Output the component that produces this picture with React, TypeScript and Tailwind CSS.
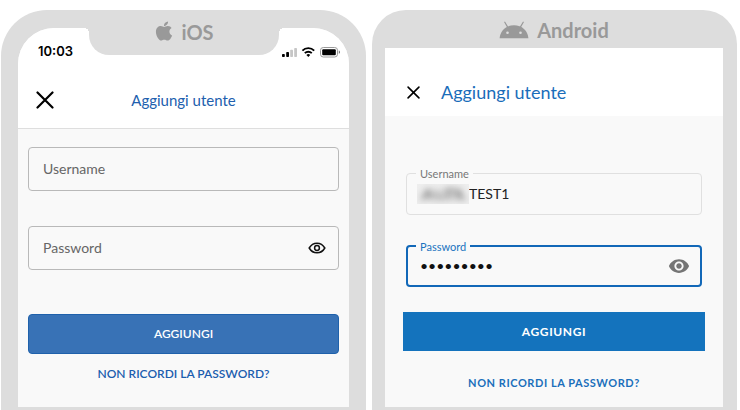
import { useState } from "react"
import { FaApple } from "react-icons/fa"
import { MdVisibility } from "react-icons/md"

interface CloseIconProps {
  className?: string
}

function CloseIcon({ className }: CloseIconProps) {
  return (
    <svg viewBox="0 0 18 18" className={className} fill="none" stroke="currentColor" strokeWidth="2.2" strokeLinecap="round">
      <path d="M1.5 1.5 16.5 16.5M16.5 1.5 1.5 16.5" />
    </svg>
  )
}

function AndroidHead() {
  return (
    <svg viewBox="0 0 30 18" className="h-[18px] w-[30px]" fill="#999999">
      <path d="M.6 17.2C1.2 9.6 7 4.2 15 4.2s13.8 5.4 14.4 13z" />
      <path d="M5.8 1.2 8.8 6.4M24.2 1.2 21.2 6.4" stroke="#999999" strokeWidth="1.2" strokeLinecap="round" />
      <circle cx="8.5" cy="11.8" r="1.3" fill="#dddddd" />
      <circle cx="21.5" cy="11.8" r="1.3" fill="#dddddd" />
    </svg>
  )
}

function StatusIcons() {
  return (
    <svg viewBox="0 0 60 12" className="h-3 w-[60px]">
      <g fill="#000000">
        <rect x="1" y="8" width="2.8" height="3" rx="0.8" />
        <rect x="5.2" y="6" width="2.8" height="5" rx="0.8" />
      </g>
      <g fill="#c6c6c6">
        <rect x="9.2" y="3.8" width="2.8" height="7.2" rx="0.8" />
        <rect x="13.2" y="2" width="2.8" height="9" rx="0.8" />
      </g>
      <g fill="none" stroke="#000000" strokeWidth="1.8">
        <path d="M21.4 4.7a8.2 8.2 0 0 1 11.8 0" />
        <path d="M23.8 7.2a4.9 4.9 0 0 1 7 0" />
      </g>
      <path d="M27.3 11 25.4 9a2.7 2.7 0 0 1 3.8 0z" />
      <rect x="39.5" y="1.5" width="17" height="9.5" rx="2.8" fill="none" stroke="#9a9a9a" />
      <rect x="41.2" y="3.2" width="13.6" height="6.1" rx="1" />
      <path d="M57.8 4.6c1 .4 1.2 1 1.2 1.6s-.2 1.2-1.2 1.6z" fill="#777777" />
    </svg>
  )
}

function OutlineEye() {
  return (
    <svg viewBox="0 0 18 12" className="h-3 w-[18px]" fill="none" stroke="#111111" strokeWidth="1.5">
      <path d="M1.2 6C3 2.9 5.8 1.2 9 1.2S15 2.9 16.8 6C15 9.1 12.2 10.8 9 10.8S3 9.1 1.2 6z" />
      <circle cx="9" cy="6" r="2.4" />
    </svg>
  )
}

// Partie masquée de l'identifiant
function HiddenPrefix() {
  return (
    <div className="h-5 w-[52px] overflow-hidden bg-[#e9e9e9]/70">
      <svg viewBox="0 0 52 20" className="h-5 w-[52px] blur-[3px]" fill="#a3a3a3">
        <path d="M3 16 9 5h5l3 11h-4l-2-4-3 4z" />
        <path d="M18 6h4v7l4 1V6h3v10h-10z" />
        <path d="M28 4h10v3h-3v9h-4V7h-3z" />
        <path d="M38 5h6l3 9 5 2h-9l-2-4v4h-3z" />
      </svg>
    </div>
  )
}

function IosPhone() {
  const [username, setUsername] = useState("")
  const [password, setPassword] = useState("")
  const [visible, setVisible] = useState(false)

  return (
    <section className="flex flex-col rounded-t-[46px] bg-[#dddddd] px-[17px] pt-[18px] pb-[3px]">
      <div className="flex flex-1 flex-col rounded-t-[36px] bg-[#f9f9f9]">
        <div className="grid h-11 grid-cols-[1fr_190px_1fr] rounded-t-[36px] bg-white">
          <div className="flex items-center pt-1 pl-5 font-[Inter,sans-serif] text-[13px] font-semibold text-black">
            10:03
          </div>
          <div className="relative flex h-[27px] items-start justify-center gap-1.5 rounded-b-[20px] bg-[#dddddd] text-[#999999] before:absolute before:top-0 before:-left-[5px] before:size-[5px] before:bg-[radial-gradient(circle_at_0_100%,transparent_5px,#dddddd_5px)] after:absolute after:top-0 after:-right-[5px] after:size-[5px] after:bg-[radial-gradient(circle_at_100%_100%,transparent_5px,#dddddd_5px)]">
            <FaApple className="-mt-2 size-[22px]" />
            <span className="-mt-2 text-xl leading-6 font-bold">iOS</span>
          </div>
          <div className="flex items-center pt-1 pl-0.5">
            <StatusIcons />
          </div>
        </div>

        <header className="grid h-[57px] grid-cols-[1fr_auto_1fr] items-center border-b border-[#dedede] bg-white px-[18px]">
          <button type="button" aria-label="Chiudi" className="size-[18px] text-black">
            <CloseIcon className="size-[18px]" />
          </button>
          <h1 className="text-[15px] leading-5 text-[#2160ae]">Aggiungi utente</h1>
        </header>

        <form className="flex flex-col px-2.5 pt-[18px]" onSubmit={(e) => e.preventDefault()}>
          <div className="relative flex h-11 items-center rounded border border-[#b9b9b9] px-3.5">
            {!username && (
              <label htmlFor="ios-username" className="pointer-events-none absolute left-3.5 text-sm text-[#666666]">
                Username
              </label>
            )}
            <input
              id="ios-username"
              value={username}
              onChange={(e) => setUsername(e.target.value)}
              className="min-w-0 flex-1 text-sm outline-none"
            />
          </div>
          <div className="relative mt-[35px] flex h-11 items-center rounded border border-[#b9b9b9] pr-3 pl-3.5">
            {!password && (
              <label htmlFor="ios-password" className="pointer-events-none absolute left-3.5 text-sm text-[#666666]">
                Password
              </label>
            )}
            <input
              id="ios-password"
              type={visible ? "text" : "password"}
              value={password}
              onChange={(e) => setPassword(e.target.value)}
              className="min-w-0 flex-1 text-sm outline-none"
            />
            <button type="button" aria-label="Mostra password" onClick={() => setVisible(!visible)}>
              <OutlineEye />
            </button>
          </div>
          <button type="submit" className="mt-11 h-10 rounded border border-[#1f61ab] bg-[#3872b6] text-xs font-semibold text-white">
            AGGIUNGI
          </button>
          <a href="#recupero" className="mt-3 self-center text-xs leading-4 font-semibold text-[#1b5dae]">
            NON RICORDI LA PASSWORD?
          </a>
        </form>
      </div>
    </section>
  )
}

function AndroidPhone() {
  const [username, setUsername] = useState("TEST1")
  const [password, setPassword] = useState("password1")
  const [visible, setVisible] = useState(false)

  return (
    <section className="flex flex-col rounded-t-[34px] bg-[#dddddd] pr-3.5 pb-[3px] pl-[13px]">
      <div className="flex h-[38px] items-center justify-center gap-2 pt-0.5 text-xl leading-6 font-bold text-[#999999]">
        <AndroidHead />
        <span>Android</span>
      </div>

      <div className="flex flex-1 flex-col bg-[#f9f9f9]">
        <header className="flex h-[68px] items-center gap-[21px] bg-white px-[22px] pt-5">
          <button type="button" aria-label="Chiudi" className="size-[13px] text-black">
            <CloseIcon className="size-[13px]" />
          </button>
          <h1 className="text-lg leading-6 text-[#1a6dba]">Aggiungi utente</h1>
        </header>

        <form className="flex flex-col px-[18px] pt-[57px]" onSubmit={(e) => e.preventDefault()}>
          <div className="relative mx-[3px] flex h-[42px] items-center rounded border border-[#e0e0e0] px-2.5">
            <label htmlFor="android-username" className="absolute -top-2 left-[9px] bg-[#f9f9f9] px-1 text-[11px] leading-4 text-[#777777]">
              Username
            </label>
            <HiddenPrefix />
            <input
              id="android-username"
              value={username}
              onChange={(e) => setUsername(e.target.value)}
              className="min-w-0 flex-1 text-sm text-[#222222] outline-none"
            />
          </div>
          <div className="relative mx-[3px] mt-[30px] flex h-[42px] items-center rounded border-2 border-[#1268b8] px-2.5">
            <label htmlFor="android-password" className="absolute -top-2 left-2 bg-[#f9f9f9] px-1 text-[11px] leading-4 text-[#1a73c0]">
              Password
            </label>
            <input
              id="android-password"
              type={visible ? "text" : "password"}
              value={password}
              onChange={(e) => setPassword(e.target.value)}
              className="min-w-0 flex-1 pl-0.5 text-sm text-[#111111] outline-none"
            />
            <button type="button" aria-label="Mostra password" onClick={() => setVisible(!visible)} className="text-[#757575]">
              <MdVisibility className="size-[22px]" />
            </button>
          </div>
          <button type="submit" className="mt-[25px] h-[39px] bg-[#1473bd] text-xs font-bold tracking-wider text-white">
            AGGIUNGI
          </button>
          <a href="#recupero" className="mt-6 self-center text-[11px] leading-4 font-bold tracking-wider text-[#1b6fbb]">
            NON RICORDI LA PASSWORD?
          </a>
        </form>
      </div>
    </section>
  )
}

export default function App() {
  return (
    <main className="grid min-h-screen grid-cols-2 gap-1.5 bg-white pt-2.5 pr-[3px] pl-px font-[Lato,sans-serif]">
      <IosPhone />
      <AndroidPhone />
    </main>
  )
}
